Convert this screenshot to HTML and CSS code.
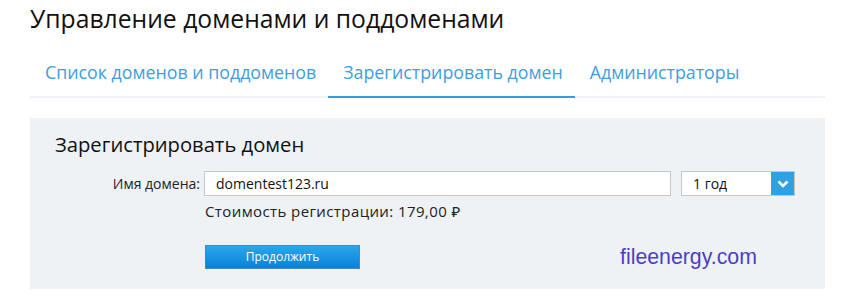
FILE: index.html
```html
<!DOCTYPE html>
<html lang="ru">
<head>
<meta charset="utf-8">
<link rel="stylesheet" href="styles.css">
</head>
<body>
<div class="page">
  <h1 class="title">Управление доменами и поддоменами</h1>
  <nav class="tabs">
    <a class="tab">Список доменов и поддоменов</a>
    <a class="tab active">Зарегистрировать домен</a>
    <a class="tab">Администраторы</a>
  </nav>
  <section class="panel">
    <h2 class="panel-title">Зарегистрировать домен</h2>
    <div class="row">
      <label class="label">Имя домена:</label>
      <div class="input">domentest123.ru</div>
      <div class="select">
        <span class="select-value">1 год</span>
        <span class="select-arrow">
          <svg width="12" height="8" viewBox="0 0 12 8"><path d="M1.5 1.5 L6 6 L10.5 1.5" fill="none" stroke="#fff" stroke-width="2.6"/></svg>
        </span>
      </div>
    </div>
    <div class="price">Стоимость регистрации: 179,00 ₽</div>
    <div class="actions">
      <button class="btn">Продолжить</button>
      <span class="watermark">fileenergy.com</span>
    </div>
  </section>
</div>
</body>
</html>
```
FILE: styles.css
```css
* { box-sizing: border-box; }
html, body { margin: 0; padding: 0; background: #fff; }
body { font-family: "Open Sans", "Noto Sans", sans-serif; color: #111; }
.page { padding: 0 36px 0 30px; width: 861px; }
.title {
  margin: 0;
  padding-top: 2px;
  height: 44px;
  font-size: 24.7px;
  font-weight: 400;
  line-height: 34px;
  color: #111;
}
.tabs {
  display: flex;
  height: 54px;
  border-bottom: 2px solid #edf0f4;
  align-items: stretch;
}
.tab {
  display: flex;
  align-items: center;
  padding: 3px 12px 0 15px;
  font-size: 17.8px;
  color: #3d9ee0;
  margin-bottom: -2px;
  border-bottom: 2px solid transparent;
}
.tab.active { border-bottom-color: #2d9ee2; }
.panel {
  margin-top: 20px;
  background: #eff2f5;
  height: 171px;
  padding: 12px 0 0 25px;
}
.panel-title {
  margin: 0;
  font-size: 20.2px;
  font-weight: 400;
  line-height: 28px;
  color: #111;
}
.row {
  display: flex;
  align-items: center;
  margin-top: 13px;
  height: 25px;
}
.label {
  width: 149px;
  text-align: right;
  font-size: 14px;
  padding-right: 4px;
  color: #222;
}
.input {
  width: 467px;
  height: 25px;
  background: #fff;
  border: 1px solid #c6c6c6;
  font-size: 14px;
  line-height: 23px;
  padding-left: 11px;
  color: #111;
}
.select {
  margin-left: 10px;
  width: 114px;
  height: 25px;
  background: #fff;
  border: 1px solid #c6c6c6;
  display: flex;
  align-items: stretch;
}
.select-value {
  flex: 1;
  font-size: 14px;
  line-height: 23px;
  padding-left: 11px;
}
.select-arrow {
  width: 23px;
  background: #2fa1e3;
  display: flex;
  align-items: center;
  justify-content: center;
}
.price {
  margin-left: 150px;
  margin-top: 5px;
  font-size: 15px;
  letter-spacing: 0.4px;
  line-height: 20px;
  color: #222;
}
.actions {
  display: flex;
  align-items: center;
  margin-left: 150px;
  margin-top: 22px;
}
.btn {
  width: 155px;
  height: 24px;
  border: 1px solid #3c8ccc;
  background: linear-gradient(#2ba7ea, #0a80d8);
  color: #fff;
  font-family: "Open Sans", "Noto Sans", sans-serif;
  font-size: 12px;
  padding: 0;
}
.watermark {
  margin-left: 260px;
  margin-top: 2px;
  font-family: "Liberation Sans", Arial, sans-serif;
  font-size: 21.3px;
  color: #4b3fc6;
}
```
